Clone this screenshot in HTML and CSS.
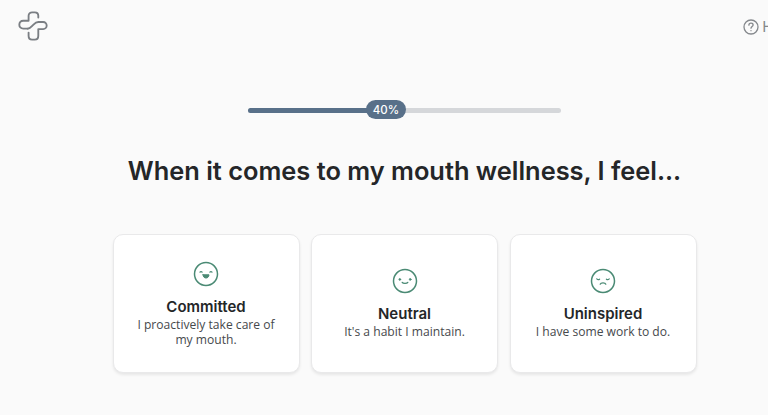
FILE: index.html
```html
<!DOCTYPE html>
<html lang="en">
<head>
    <meta charset="UTF-8">
    <meta name="viewport" content="width=device-width, initial-scale=1.0">
    <title>Mouth wellness quiz</title>
    <link rel="stylesheet" href="styles.css">
</head>
<body>
    <div class="page">
        <header class="top-bar">
            <svg class="logo" width="30" height="30" viewBox="0 0 34 34" fill="none" stroke="#7a7e83" stroke-width="2.1" stroke-linecap="round" stroke-linejoin="round">
                <path d="M11 20 L6 20 C3 20 1.5 18 1.5 15.5 C1.5 13 3 11 6 11 L12 11 L12 5.5 C12 3 14 1.5 16 1.5 L19 1.5 C21.5 1.5 23 3 23 5.5 L23 7.5"/>
                <path d="M11 20 C14 20 15.5 17.5 17 16 C18.5 14.5 20 12.5 23 12.5 L28.5 12.5 C31 12.5 32.5 14.5 32.5 16.5 C32.5 18.5 31 20.5 28.5 20.5 L23 20.5 L23 28 C23 30.5 21.5 32.5 19 32.5 L16 32.5 C13.5 32.5 12 30.5 12 28 L12 24.5"/>
            </svg>
            <div class="help">
                <svg width="16" height="16" viewBox="0 0 16 16" fill="none" stroke="#85888c" stroke-width="1.3" stroke-linecap="round">
                    <circle cx="8" cy="8" r="7"/>
                    <path d="M5.9 6.2 C5.9 4.9 7 4.2 8 4.2 C9.2 4.2 10.1 5 10.1 6 C10.1 7.4 8 7.6 8 9.2"/>
                    <path d="M8 11.6 L8 11.7"/>
                </svg>
                <span>Help</span>
            </div>
        </header>

        <div class="progress">
            <div class="progress-fill"></div>
            <div class="progress-badge">40%</div>
        </div>

        <h1 class="question">When it comes to my mouth wellness, I feel...</h1>

        <div class="cards">
            <div class="card">
                <svg class="mood" width="26" height="26" viewBox="0 0 26 26" fill="none" stroke="#4a8a74" stroke-width="1.5" stroke-linecap="round">
                    <circle cx="13" cy="13" r="11.5"/>
                    <path d="M7 11.2 C7.6 10.3 8.5 10.3 9.1 11.2" stroke-width="1.2"/>
                    <path d="M16.9 11.2 C17.5 10.3 18.4 10.3 19 11.2" stroke-width="1.2"/>
                    <path d="M10 13.8 L16 13.8 C15.8 16 14.6 17 13 17 C11.4 17 10.2 16 10 13.8 Z" fill="#4a8a74" stroke-width="1"/>
                </svg>
                <h2 class="card-title">Committed</h2>
                <p class="card-text">I proactively take care of my mouth.</p>
            </div>
            <div class="card">
                <svg class="mood" width="26" height="26" viewBox="0 0 26 26" fill="none" stroke="#4a8a74" stroke-width="1.5" stroke-linecap="round">
                    <circle cx="13" cy="13" r="11.5"/>
                    <circle cx="7.8" cy="11.4" r="0.9" fill="#4a8a74" stroke-width="0.8"/>
                    <circle cx="18.2" cy="11.4" r="0.9" fill="#4a8a74" stroke-width="0.8"/>
                    <path d="M10.2 14.4 C11 15.8 15 15.8 15.8 14.4" stroke-width="1.3"/>
                </svg>
                <h2 class="card-title">Neutral</h2>
                <p class="card-text">It's a habit I maintain.</p>
            </div>
            <div class="card">
                <svg class="mood" width="26" height="26" viewBox="0 0 26 26" fill="none" stroke="#4a8a74" stroke-width="1.5" stroke-linecap="round">
                    <circle cx="13" cy="13" r="11.5"/>
                    <path d="M6.8 10.8 C7.6 11.8 8.8 11.8 9.6 11.2" stroke-width="1.2"/>
                    <path d="M19.2 10.8 C18.4 11.8 17.2 11.8 16.4 11.2" stroke-width="1.2"/>
                    <path d="M10.2 16.2 C10.8 14.5 15.2 14.5 15.8 16.2" stroke-width="1.3"/>
                </svg>
                <h2 class="card-title">Uninspired</h2>
                <p class="card-text">I have some work to do.</p>
            </div>
        </div>
    </div>
</body>
</html>
```
FILE: styles.css
```css
html, body {
    margin: 0;
    padding: 0;
    overflow: hidden;
    background-color: #fafafa;
}
.page {
    width: 809px;
    height: 415px;
    display: flex;
    flex-direction: column;
    align-items: center;
    color: #242628;
    font-family: 'Open Sans', sans-serif;
}
.top-bar {
    width: 100%;
    height: 45px;
    box-sizing: border-box;
    padding: 11px 14px 0 18px;
    display: flex;
    justify-content: space-between;
    align-items: flex-start;
}
.logo {
    display: block;
}
.help {
    display: flex;
    align-items: center;
    gap: 3px;
    margin-top: 6px;
    font-family: 'Inter', sans-serif;
    font-size: 15px;
    color: #85888c;
}
.progress {
    position: relative;
    width: 313px;
    height: 4.5px;
    margin-top: 63px;
    border-radius: 3px;
    background-color: #d5d7da;
}
.progress-fill {
    width: 40%;
    height: 100%;
    border-radius: 3px;
    background-color: #587089;
}
.progress-badge {
    position: absolute;
    left: 118px;
    top: -8px;
    width: 40px;
    height: 19px;
    border-radius: 10px;
    background-color: #587089;
    color: #fff;
    font-family: 'Inter', sans-serif;
    font-size: 11.5px;
    font-weight: 500;
    line-height: 20px;
    text-align: center;
}
.question {
    margin: 40px 0 0;
    font-family: 'Inter', sans-serif;
    font-size: 25.4px;
    font-weight: 600;
    line-height: 36px;
    white-space: nowrap;
}
.cards {
    display: flex;
    gap: 11.5px;
    margin-top: 45px;
}
.card {
    width: 187px;
    height: 139px;
    box-sizing: border-box;
    padding: 1px 16px 0;
    display: flex;
    flex-direction: column;
    align-items: center;
    justify-content: center;
    background-color: #fff;
    border: 1px solid #e9e9ea;
    border-radius: 10px;
    box-shadow: 0 2px 3px rgba(0, 0, 0, 0.08);
    text-align: center;
}
.card-title {
    margin: 10px 0 0;
    font-family: 'Inter', sans-serif;
    font-size: 15px;
    font-weight: 600;
    line-height: 20px;
}
.card-text {
    margin: 0;
    font-size: 12.1px;
    line-height: 15px;
    color: #46494c;
}
```
